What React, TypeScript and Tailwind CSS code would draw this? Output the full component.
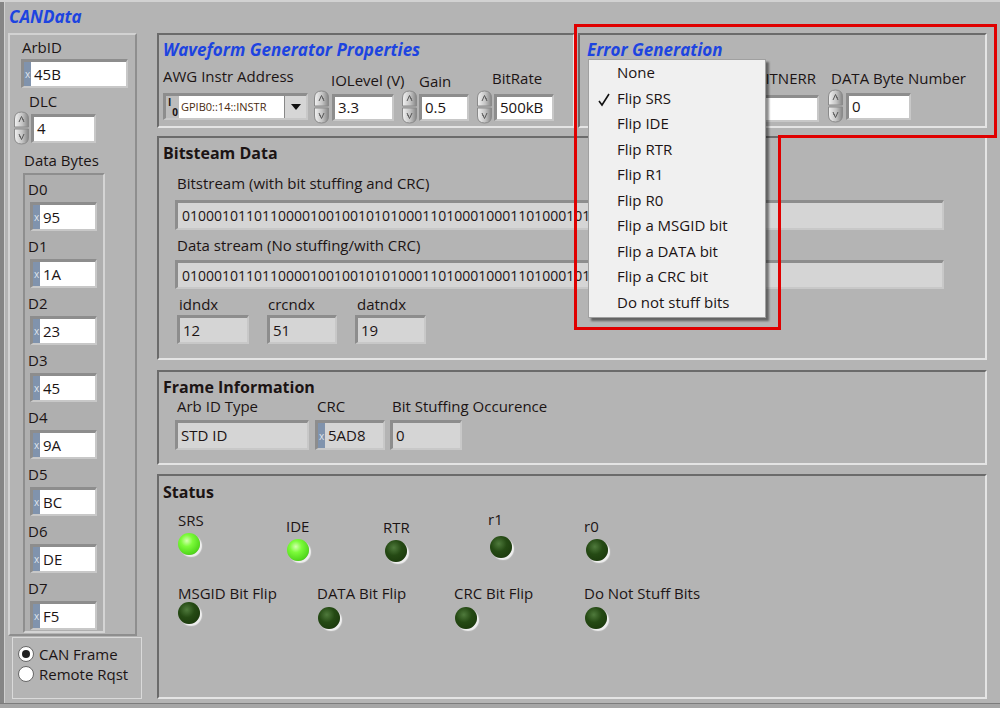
import React from 'react';

const bevel =
  'border-t-[3px] border-l-[3px] border-r-2 border-b-2 border-t-[#8d8d8d] border-l-[#8d8d8d] border-r-[#c8c8c8] border-b-[#c8c8c8]';
const panel =
  'border-2 border-t-[#6b6b6b] border-l-[#6b6b6b] border-r-[#e4e4e4] border-b-[#e4e4e4]';
const label = 'text-[15px] leading-[18px] text-[#1c1414] whitespace-nowrap';
const title = 'text-[16px] leading-[20px] font-bold whitespace-nowrap';
const blueTitle = 'text-[17px] leading-[20px] font-bold italic text-[#1d44e0] whitespace-nowrap';

const bits1 = '010001011011000010010010101000110100010001101000101';
const bits2 = '010001011011000010010010101000110100010001101000101';

function Radix() {
  return (
    <div className="w-[7px] shrink-0 bg-[#8093ad] flex items-center justify-center text-[10px] leading-none text-[#dfe4ec]">
      x
    </div>
  );
}

function Field({ cls, value, radix, gray }: { cls: string; value: string; radix?: boolean; gray?: boolean }) {
  return (
    <div className={`${bevel} flex shrink-0 ${cls}`}>
      {radix && <Radix />}
      <div
        className={`flex-1 flex items-center pl-[3px] overflow-hidden whitespace-nowrap text-[15px] text-[#1c1414] ${
          gray ? 'bg-[#d5d5d5]' : 'bg-white'
        }`}
      >
        {value}
      </div>
    </div>
  );
}

function Spinner() {
  return (
    <svg width="17" height="34" viewBox="0 0 17 34" className="shrink-0">
      <defs>
        <linearGradient id="spg" x1="0" x2="1" y1="0" y2="0">
          <stop offset="0" stopColor="#f2f2f2" />
          <stop offset="0.55" stopColor="#c4c4c4" />
          <stop offset="1" stopColor="#858585" />
        </linearGradient>
      </defs>
      <path d="M1.5 16 L1.5 8 Q1.5 1 8.5 1 Q15.5 1 15.5 8 L15.5 16 Z" fill="url(#spg)" stroke="#8a8a8a" />
      <path d="M1.5 18 L1.5 26 Q1.5 33 8.5 33 Q15.5 33 15.5 26 L15.5 18 Z" fill="url(#spg)" stroke="#8a8a8a" />
      <path d="M6 11 L8.5 5.5 L11 11" fill="none" stroke="#555" strokeWidth="1" />
      <path d="M9.5 8.5 L10.5 8.5" stroke="#555" />
      <path d="M6 23 L8.5 28.5 L11 23" fill="none" stroke="#555" strokeWidth="1" />
      <path d="M6.5 25.5 L7.5 25.5" stroke="#555" />
    </svg>
  );
}

function Led({ on, cls }: { on?: boolean; cls: string }) {
  return (
    <div
      className={`w-[22px] h-[22px] rounded-full shadow-[2px_2px_1px_#efefef] ${cls} ${
        on
          ? 'bg-[radial-gradient(circle_at_40%_35%,#d4ffb0_0%,#7cfb3a_30%,#52d81c_70%,#3aa812_100%)]'
          : 'bg-[radial-gradient(circle_at_40%_35%,#4f7a3c_0%,#254a14_40%,#173209_100%)]'
      }`}
    />
  );
}

function StatusItem({ name, cls, ledCls, on }: { name: string; cls: string; ledCls: string; on?: boolean }) {
  return (
    <div className={`flex flex-col shrink-0 ${cls}`}>
      <div className={label}>{name}</div>
      <Led on={on} cls={ledCls} />
    </div>
  );
}

const menu = [
  'None',
  'Flip SRS',
  'Flip IDE',
  'Flip RTR',
  'Flip R1',
  'Flip R0',
  'Flip a MSGID bit',
  'Flip a DATA bit',
  'Flip a CRC bit',
  'Do not stuff bits',
];

const bytes = [
  ['D0', '95'],
  ['D1', '1A'],
  ['D2', '23'],
  ['D3', '45'],
  ['D4', '9A'],
  ['D5', 'BC'],
  ['D6', 'DE'],
  ['D7', 'F5'],
];

export default function App() {
  return (
    <div className="w-[1000px] h-[708px] bg-[#b4b4b4] relative overflow-hidden font-['Open_Sans',sans-serif] text-[#1c1414] flex flex-col">
      <div className="h-[2px] bg-[#d2d2d2] shrink-0" />
      <div className="flex flex-1">
        <div className="w-[5px] shrink-0 bg-[#858585] border-r border-[#cfcfcf]" />

        {/* CANData cluster */}
        <div className="w-[152px] shrink-0 flex flex-col">
          <div className={`${blueTitle} ml-[4px] mt-[5px]`}>CANData</div>
          <div className="ml-[3px] mt-[6px] w-[129px] h-[603px] border-2 border-t-[#d2d2d2] border-l-[#d2d2d2] border-r-[#8e8e8e] border-b-[#8e8e8e] flex flex-col">
            <div className={`${label} ml-[12px] mt-[3px]`}>ArbID</div>
            <Field cls="ml-[11px] mt-[3px] w-[107px] h-[29px]" value="45B" radix />
            <div className={`${label} ml-[19px] mt-[4px]`}>DLC</div>
            <div className="ml-[3px] mt-[1px] flex items-center gap-[1px]">
              <Spinner />
              <Field cls="w-[65px] h-[29px]" value="4" />
            </div>
            <div className={`${label} ml-[14px] mt-[6px]`}>Data Bytes</div>
            <div className="ml-[13px] mt-[4px] w-[82px] h-[460px] border-2 border-t-[#8e8e8e] border-l-[#8e8e8e] border-r-[#d4d4d4] border-b-[#d4d4d4] bg-[#afafaf] flex flex-col">
              {bytes.map(([n, v]) => (
                <div key={n} className="h-[57px] flex flex-col shrink-0">
                  <div className={`${label} ml-[3px] mt-[5px]`}>{n}</div>
                  <Field cls="ml-[5px] mt-[4px] w-[67px] h-[29px]" value={v} radix />
                </div>
              ))}
            </div>
          </div>
          <div className="ml-[7px] mt-[1px] w-[130px] h-[62px] border border-[#dadada] flex flex-col pt-[6px] pl-[5px]">
            {['CAN Frame', 'Remote Rqst'].map((r, i) => (
              <div key={r} className="flex items-center gap-[5px] h-[20px]">
                <div className="w-[16px] h-[16px] rounded-full bg-white border border-[#666] flex items-center justify-center">
                  {i === 0 && <div className="w-[8px] h-[8px] rounded-full bg-[#222]" />}
                </div>
                <span className="text-[15px] leading-[20px]">{r}</span>
              </div>
            ))}
          </div>
        </div>

        {/* Right side panels */}
        <div className="w-[830px] shrink-0 flex flex-col pt-[31px]">
          <div className="flex gap-[3px]">
            <div className={`${panel} w-[418px] h-[95px] flex flex-col pl-[4px] pt-[5px]`}>
              <div className={blueTitle}>Waveform Generator Properties</div>
              <div className="flex items-start">
                <div className="flex flex-col w-[150px]">
                  <div className={`${label} mt-[7px]`}>AWG Instr Address</div>
                  <div className={`${bevel} mt-[8px] w-[145px] h-[27px] flex bg-[#bdbdbd]`}>
                    <div className="w-[13px] shrink-0 flex flex-col items-center justify-center text-[10px] leading-[10px] font-bold">
                      <span className="self-start ml-[2px]">I</span>
                      <span className="self-end mr-[1px]">0</span>
                    </div>
                    <div className="w-[105px] bg-white flex items-center pl-[2px] text-[11px] text-[#4a2a10] whitespace-nowrap">
                      GPIB0::14::INSTR
                    </div>
                    <div className="flex-1 flex items-center justify-center bg-[#d6d6d6] border-l border-[#888]">
                      <svg width="10" height="6" viewBox="0 0 10 6">
                        <path d="M0 0 L10 0 L5 6 Z" fill="#111" />
                      </svg>
                    </div>
                  </div>
                </div>
                <div className="flex flex-col w-[80px]">
                  <div className={`${label} ml-[18px] mt-[11px]`}>IOLevel (V)</div>
                  <div className="flex items-center gap-[2px] mt-[1px]">
                    <Spinner />
                    <Field cls="w-[62px] h-[27px]" value="3.3" />
                  </div>
                </div>
                <div className="flex flex-col w-[67px] ml-[8px]">
                  <div className={`${label} ml-[18px] mt-[12px]`}>Gain</div>
                  <div className="flex items-center gap-[1px] mt-[0px]">
                    <Spinner />
                    <Field cls="w-[50px] h-[27px]" value="0.5" />
                  </div>
                </div>
                <div className="flex flex-col w-[77px] ml-[8px]">
                  <div className={`${label} ml-[16px] mt-[9px]`}>BitRate</div>
                  <div className="flex items-center gap-[1px] mt-[3px]">
                    <Spinner />
                    <Field cls="w-[60px] h-[27px]" value="500kB" />
                  </div>
                </div>
              </div>
            </div>

            <div className={`${panel} w-[409px] h-[95px] flex flex-col pl-[7px] pt-[5px]`}>
              <div className={blueTitle}>Error Generation</div>
              <div className="flex items-start">
                <div className="w-[140px] shrink-0" />
                <div className="flex flex-col items-end w-[92px]">
                  <div className={`${label} mt-[9px] mr-[3px]`}>BITNERR</div>
                  <Field cls="mt-[8px] w-[80px] h-[27px]" value="" />
                </div>
                <div className="flex flex-col ml-[8px]">
                  <div className={`${label} ml-[4px] mt-[9px]`}>DATA Byte Number</div>
                  <div className="flex items-center gap-[2px] mt-[2px]">
                    <Spinner />
                    <Field cls="w-[65px] h-[27px]" value="0" />
                  </div>
                </div>
              </div>
            </div>
          </div>

          <div className={`${panel} mt-[8px] h-[224px] flex flex-col pl-[4px] pt-[5px]`}>
            <div className={title}>Bitsteam Data</div>
            <div className={`${label} ml-[14px] mt-[11px]`}>Bitstream (with bit stuffing and CRC)</div>
            <div className={`${bevel} ml-[12px] mt-[8px] w-[769px] h-[30px] bg-[#d5d5d5] flex items-center pl-[4px] overflow-hidden whitespace-nowrap text-[14px]`}>
              {bits1}
            </div>
            <div className={`${label} ml-[14px] mt-[6px]`}>Data stream (No stuffing/with CRC)</div>
            <div className={`${bevel} ml-[12px] mt-[6px] w-[769px] h-[29px] bg-[#d5d5d5] flex items-center pl-[4px] overflow-hidden whitespace-nowrap text-[14px]`}>
              {bits2}
            </div>
            <div className="flex mt-[6px] ml-[14px]">
              <div className="flex flex-col w-[90px]">
                <div className={`${label} ml-[2px]`}>idndx</div>
                <Field cls="mt-[2px] w-[72px] h-[29px]" value="12" gray />
              </div>
              <div className="flex flex-col w-[88px]">
                <div className={`${label} ml-[1px]`}>crcndx</div>
                <Field cls="mt-[2px] w-[70px] h-[29px]" value="51" gray />
              </div>
              <div className="flex flex-col">
                <div className={`${label} ml-[2px]`}>datndx</div>
                <Field cls="mt-[2px] w-[71px] h-[29px]" value="19" gray />
              </div>
            </div>
          </div>

          <div className={`${panel} mt-[10px] h-[95px] flex flex-col pl-[4px] pt-[5px]`}>
            <div className={`${title} leading-[19px]`}>Frame Information</div>
            <div className="flex ml-[12px]">
              <div className="flex flex-col w-[140px]">
                <div className={`${label} ml-[2px]`}>Arb ID Type</div>
                <Field cls="mt-[5px] w-[134px] h-[30px]" value="STD ID" gray />
              </div>
              <div className="flex flex-col w-[75px]">
                <div className={`${label} ml-[2px]`}>CRC</div>
                <Field cls="mt-[5px] w-[70px] h-[30px]" value="5AD8" radix gray />
              </div>
              <div className="flex flex-col">
                <div className={`${label} ml-[2px]`}>Bit Stuffing Occurence</div>
                <Field cls="mt-[5px] w-[72px] h-[30px]" value="0" gray />
              </div>
            </div>
          </div>

          <div className={`${panel} mt-[9px] h-[225px] flex flex-col pl-[4px] pt-[6px]`}>
            <div className={title}>Status</div>
            <div className="flex items-start h-[82px] pl-[15px]">
              <StatusItem name="SRS" cls="w-[108px] mt-[9px]" ledCls="mt-[4px]" on />
              <StatusItem name="IDE" cls="w-[97px] mt-[15px]" ledCls="mt-[4px] ml-[1px]" on />
              <StatusItem name="RTR" cls="w-[105px] mt-[16px]" ledCls="mt-[4px] ml-[2px]" />
              <StatusItem name="r1" cls="w-[96px] mt-[8px]" ledCls="mt-[8px] ml-[2px]" />
              <StatusItem name="r0" cls="mt-[15px]" ledCls="mt-[4px] ml-[2px]" />
            </div>
            <div className="flex items-start pl-[15px]">
              <StatusItem name="MSGID Bit Flip" cls="w-[139px]" ledCls="mt-[0px]" />
              <StatusItem name="DATA Bit Flip" cls="w-[137px]" ledCls="mt-[5px] ml-[1px]" />
              <StatusItem name="CRC Bit Flip" cls="w-[130px]" ledCls="mt-[5px] ml-[1px]" />
              <StatusItem name="Do Not Stuff Bits" cls="" ledCls="mt-[5px] ml-[1px]" />
            </div>
          </div>
        </div>
      </div>
      <div className="h-[5px] shrink-0 bg-[#a6a6a6] border-t border-[#7c7c7c]" />

      {/* Open ring menu */}
      <div className="absolute left-[588px] top-[59px] w-[178px] h-[259px] bg-[#f0f0f0] border border-[#a0a0a0] shadow-[3px_3px_2px_rgba(0,0,0,0.45)] flex flex-col">
        {menu.map((m, i) => (
          <div key={m} className="h-[25.5px] relative pl-[28px] text-[15px] leading-[25.5px] whitespace-nowrap">
            {i === 1 && (
              <svg width="12" height="14" viewBox="0 0 12 14" className="absolute left-[9px] top-[7px]">
                <path d="M1 8 L4 12 L11 1" fill="none" stroke="#111" strokeWidth="1.6" />
              </svg>
            )}
            {m}
          </div>
        ))}
      </div>

      {/* red annotation outline */}
      <svg width="1000" height="708" className="absolute left-0 top-0 pointer-events-none">
        <path d="M575.5 25.5 L995.5 25.5 L995.5 136.5 L779.5 136.5 L779.5 328.5 L575.5 328.5 Z" fill="none" stroke="#e00000" strokeWidth="3" />
      </svg>
    </div>
  );
}
